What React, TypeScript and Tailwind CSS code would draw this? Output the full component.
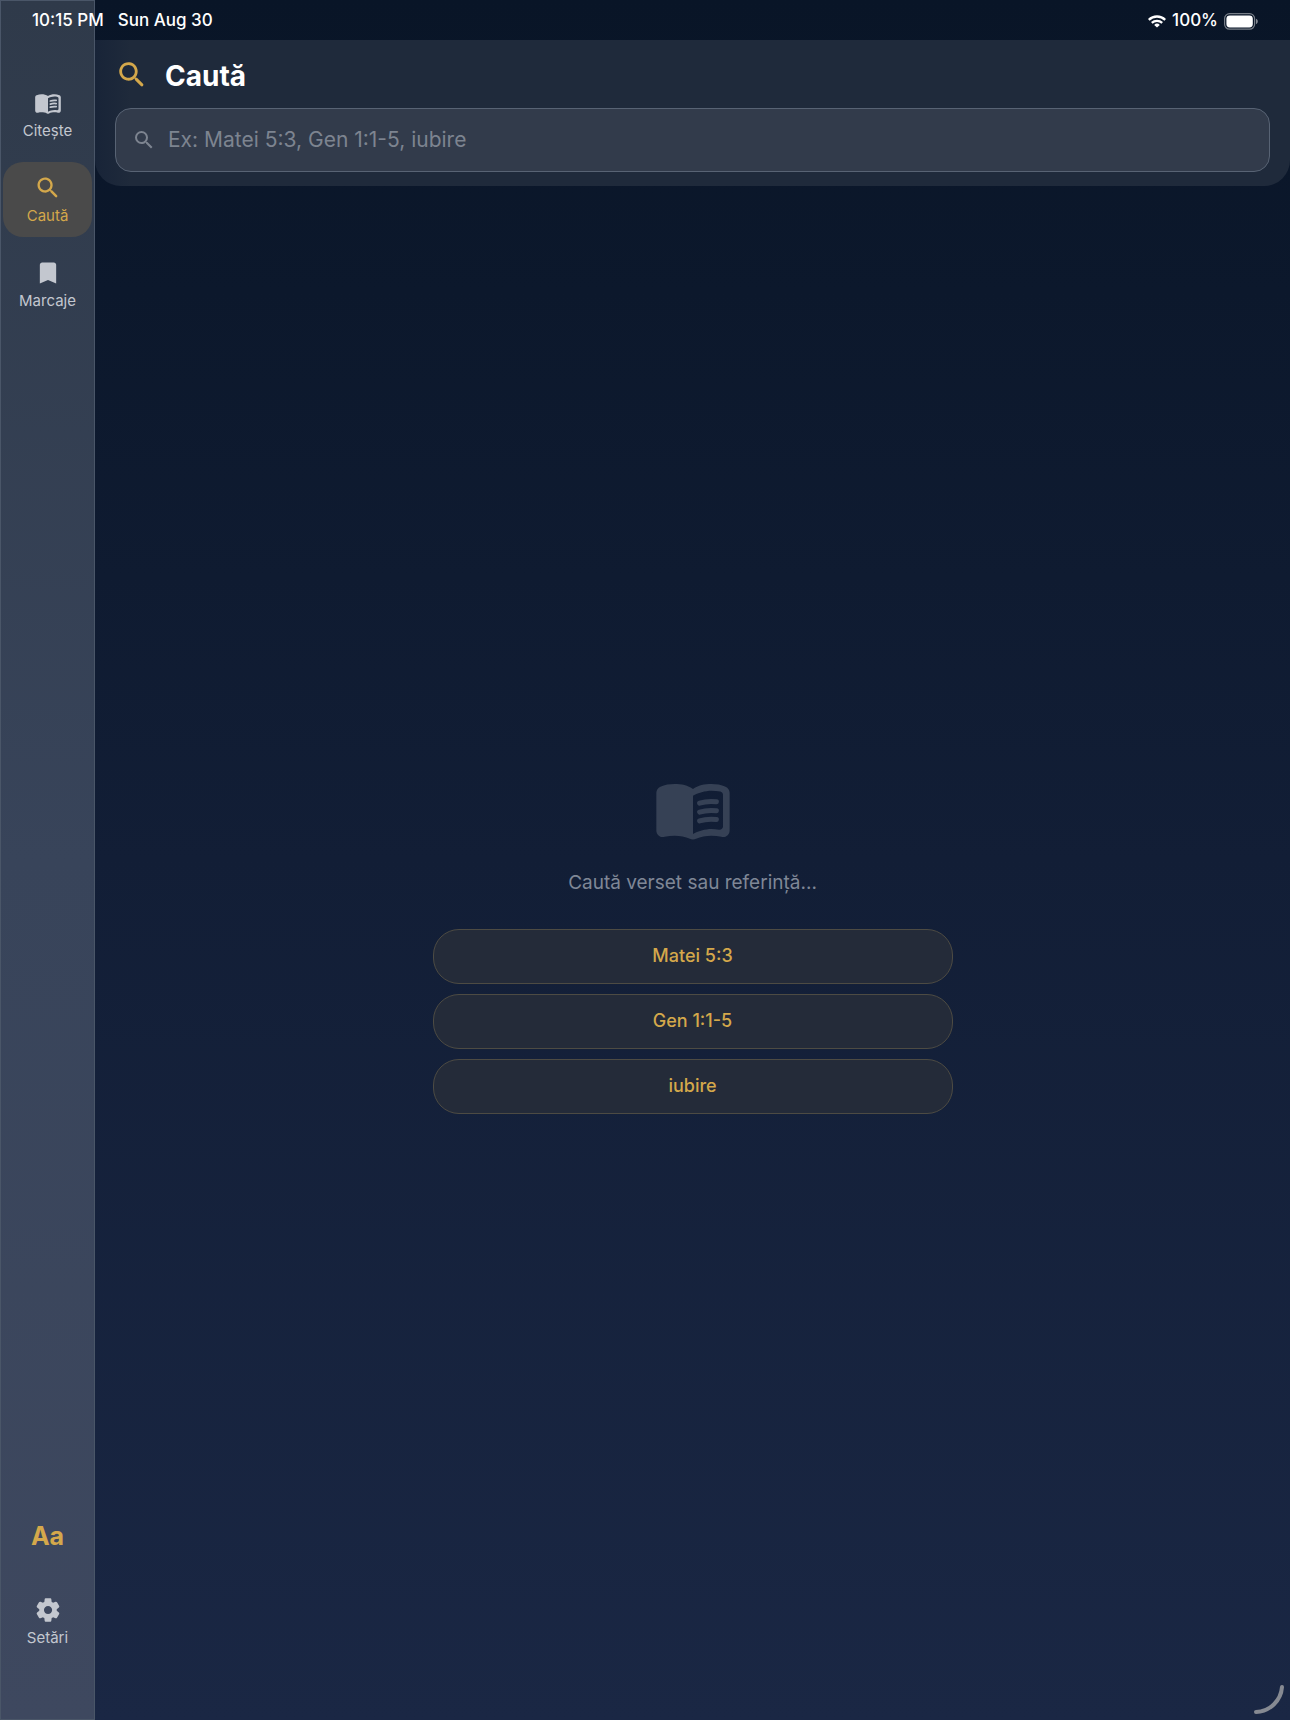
import React, { useState } from 'react';
import { MdBookmark, MdSearch } from 'react-icons/md';

type IconProps = { className?: string };

const BookIcon = ({ className }: IconProps) => (
  <svg viewBox="0 0 24 24" fill="currentColor" className={className} aria-hidden="true">
    <path d="M17.5 4.5c-1.95 0-4.05.4-5.5 1.5-1.45-1.1-3.55-1.5-5.5-1.5-1.45 0-2.99.22-4.28.79C1.49 5.62 1 6.33 1 7.14v11.28c0 1.3 1.22 2.26 2.48 1.94.98-.25 2.02-.36 3.02-.36 1.56 0 3.22.26 4.56.92.6.3 1.28.3 1.87 0 1.34-.67 3-.92 4.56-.92 1 0 2.04.11 3.02.36 1.26.33 2.48-.63 2.48-1.94V7.14c0-.81-.49-1.52-1.22-1.85-1.28-.57-2.82-.79-4.27-.79zM21 17.23c0 .63-.58 1.09-1.2.98-.75-.14-1.53-.2-2.3-.2-1.7 0-4.15.65-5.5 1.5V8c1.35-.85 3.8-1.5 5.5-1.5.92 0 1.83.09 2.7.28.46.1.8.51.8.98v9.47z" />
    <g fill="none" stroke="currentColor" strokeWidth="1.5" strokeLinecap="round">
      <path d="M13.98 10.26c1.45-.46 3.3-.6 5.04-.41" />
      <path d="M13.98 12.92c1.45-.46 3.3-.6 5.04-.41" />
      <path d="M13.98 15.58c1.45-.46 3.3-.6 5.04-.41" />
    </g>
  </svg>
);

const SearchIcon = ({ className }: IconProps) => (
  <svg viewBox="0 0 24 24" fill="currentColor" className={className} aria-hidden="true">
    <path d="M15.5 14h-.79l-.28-.27c1.2-1.4 1.82-3.31 1.48-5.34-.47-2.78-2.79-5-5.59-5.34-4.23-.52-7.79 3.04-7.27 7.27.34 2.8 2.56 5.12 5.34 5.59 2.03.34 3.94-.28 5.34-1.48l.27.28v.79l4.25 4.25c.41.41 1.08.41 1.49 0 .41-.41.41-1.08 0-1.49L15.5 14zm-6 0C7.01 14 5 11.99 5 9.5S7.01 5 9.5 5 14 7.01 14 9.5 11.99 14 9.5 14z" />
  </svg>
);

const SettingsIcon = ({ className }: IconProps) => (
  <svg viewBox="0 0 24 24" fill="currentColor" className={className} aria-hidden="true">
    <path d="M19.5 12c0-.23-.01-.45-.03-.68l1.86-1.41c.4-.3.51-.86.26-1.3l-1.87-3.23c-.25-.44-.79-.62-1.25-.42l-2.15.91c-.37-.26-.76-.49-1.17-.68l-.29-2.31c-.06-.5-.49-.88-.99-.88h-3.73c-.51 0-.94.38-1 .88l-.29 2.31c-.41.19-.8.42-1.17.68l-2.15-.91c-.46-.2-1-.02-1.25.42L2.41 8.62c-.25.44-.14.99.26 1.3l1.86 1.41c-.02.22-.03.44-.03.67s.01.45.03.68l-1.86 1.41c-.4.3-.51.86-.26 1.3l1.87 3.23c.25.44.79.62 1.25.42l2.15-.91c.37.26.76.49 1.17.68l.29 2.31c.06.5.49.88.99.88h3.73c.5 0 .93-.38.99-.88l.29-2.31c.41-.19.8-.42 1.17-.68l2.15.91c.46.2 1 .02 1.25-.42l1.87-3.23c.25-.44.14-.99-.26-1.3l-1.86-1.41c.03-.23.04-.45.04-.68zm-7.46 3.5c-1.93 0-3.5-1.57-3.5-3.5s1.57-3.5 3.5-3.5 3.5 1.57 3.5 3.5-1.57 3.5-3.5 3.5z" />
  </svg>
);

const WifiIcon = ({ className }: IconProps) => (
  <svg viewBox="0 0 18 13" className={className} aria-hidden="true">
    <g fill="none" stroke="currentColor" strokeWidth="2.3">
      <path d="M.8 4.8a11.8 11.8 0 0 1 16.4 0" />
      <path d="M3.8 7.9a7.5 7.5 0 0 1 10.4 0" />
    </g>
    <path fill="currentColor" d="M9 12.6 6.2 9.9a4 4 0 0 1 5.6 0z" />
  </svg>
);

const BatteryIcon = ({ className }: IconProps) => (
  <svg viewBox="0 0 34 17" className={className} aria-hidden="true">
    <rect x=".6" y=".6" width="30" height="15.6" rx="5" fill="none" stroke="currentColor" strokeOpacity=".45" strokeWidth="1.2" />
    <rect x="2.4" y="2.4" width="26.4" height="12" rx="3.4" fill="currentColor" />
    <path d="M32 5.8c1.1.4 1.8 1.4 1.8 2.6s-.7 2.2-1.8 2.6z" fill="currentColor" fillOpacity=".5" />
  </svg>
);

type NavItemProps = {
  label: string;
  icon: React.ReactNode;
  active?: boolean;
  onClick?: () => void;
};

const NavItem = ({ label, icon, active, onClick }: NavItemProps) => (
  <button
    type="button"
    onClick={onClick}
    aria-current={active ? 'page' : undefined}
    className={`flex w-full flex-col items-center gap-1 rounded-[20px] pt-3 pb-[11px] text-[15px] leading-5 ${
      active ? 'bg-[#4a4a4a] text-[#d4a84b]' : 'text-[#c3c7cf]'
    }`}
  >
    {icon}
    {label}
  </button>
);

const tabs = [
  { id: 'read', label: 'Citește', icon: <BookIcon className="size-7" /> },
  { id: 'search', label: 'Caută', icon: <SearchIcon className="size-7" /> },
  { id: 'marks', label: 'Marcaje', icon: <MdBookmark className="size-7" /> },
];

const suggestions = ['Matei 5:3', 'Gen 1:1-5', 'iubire'];

const App: React.FC = () => {
  const [tab, setTab] = useState('search');
  const [query, setQuery] = useState('');

  return (
    <div className="relative flex min-h-screen bg-linear-to-b from-[#091527] via-[#121e36] to-[#1a2744] font-['Inter',sans-serif] text-white">
      {/* Status bar floats over the sidebar and the page */}
      <div className="absolute inset-x-0 top-0 z-10 flex h-10 items-center justify-between px-8 pt-0.5 text-[17px] font-medium">
        <div className="flex gap-3.5">
          <span>10:15 PM</span>
          <span>Sun Aug 30</span>
        </div>
        <div className="flex items-center gap-1.5">
          <WifiIcon className="h-[13px] w-[18px]" />
          <span>100%</span>
          <BatteryIcon className="h-[17px] w-[34px]" />
        </div>
      </div>

      <nav className="flex w-[95px] shrink-0 flex-col justify-between border border-[#4a5668] bg-linear-to-b from-[#2f3a4a] via-[#38445a] to-[#3e485f] px-0.5 pt-19 pb-15">
        <div className="flex flex-col gap-2.5">
          {tabs.map((t) => (
            <NavItem key={t.id} label={t.label} icon={t.icon} active={t.id === tab} onClick={() => setTab(t.id)} />
          ))}
        </div>
        <div className="flex flex-col items-center gap-8">
          <button type="button" className="text-[25px] leading-8 font-bold text-[#d4a84b]">
            Aa
          </button>
          <NavItem label="Setări" icon={<SettingsIcon className="size-7" />} />
        </div>
      </nav>

      <main className="flex min-w-0 flex-1 flex-col pt-10">
        <header className="rounded-b-[26px] bg-linear-to-r from-[#182438] to-[#1f2a3b] to-3% px-5 pt-3.5 pb-3.5">
          <div className="flex items-center gap-4">
            <SearchIcon className="size-[34px] text-[#d4a84b]" />
            <h1 className="pt-0.5 text-[28px] leading-10 font-bold">Caută</h1>
          </div>
          <label className="mt-3 flex h-16 items-center gap-3 rounded-2xl border border-[#586374] bg-[#323b4b] px-4">
            <MdSearch className="size-6 shrink-0 text-[#7d8490]" />
            <input
              type="text"
              aria-label="Caută"
              value={query}
              onChange={(e) => setQuery(e.target.value)}
              placeholder="Ex: Matei 5:3, Gen 1:1-5, iubire"
              className="min-w-0 flex-1 bg-transparent text-[21px] outline-none placeholder:text-[#7d8490]"
            />
          </label>
        </header>

        <section className="flex flex-1 flex-col items-center justify-center px-5 pb-6">
          <BookIcon className="size-20 text-[#364155]" />
          <p className="mt-5 text-[19px] leading-7 text-[#7f8796]">Caută verset sau referință...</p>
          <div className="mt-8 flex w-full max-w-[520px] flex-col gap-2.5">
            {suggestions.map((s) => (
              <button
                key={s}
                type="button"
                onClick={() => setQuery(s)}
                className="h-[55px] rounded-[26px] border border-[#4d4b43] bg-[#242b39] text-lg font-medium text-[#d4a84b]"
              >
                {s}
              </button>
            ))}
          </div>
        </section>
      </main>

      <svg viewBox="0 0 32 32" className="absolute right-1 bottom-1 size-8 text-[#868a92]" aria-hidden="true">
        <path d="M28 3A27 27 0 0 1 2 28" fill="none" stroke="currentColor" strokeWidth="4" strokeLinecap="round" />
      </svg>
    </div>
  );
};

export default App;
